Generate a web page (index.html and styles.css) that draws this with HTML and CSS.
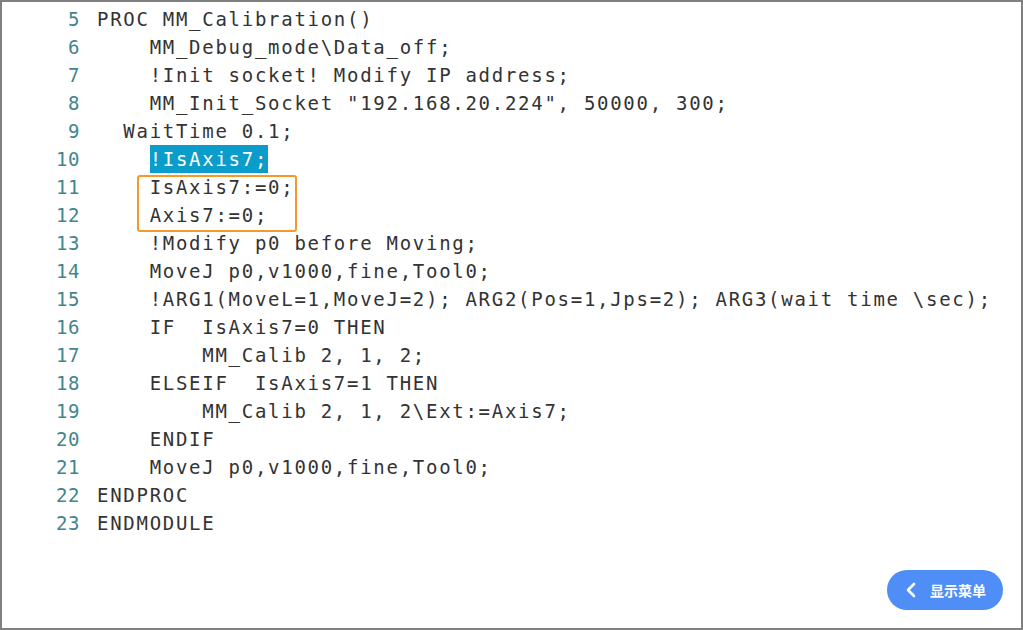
FILE: index.html
```html
<!DOCTYPE html>
<html>
<head>
<meta charset="utf-8">
<link rel="stylesheet" href="styles.css">
</head>
<body>
<div class="frame">
  <div class="code">
    <div class="line"><span class="num">5</span><span class="txt">PROC MM_Calibration()</span></div>
    <div class="line"><span class="num">6</span><span class="txt">    MM_Debug_mode\Data_off;</span></div>
    <div class="line"><span class="num">7</span><span class="txt">    !Init socket! Modify IP address;</span></div>
    <div class="line"><span class="num">8</span><span class="txt">    MM_Init_Socket "192.168.20.224", 50000, 300;</span></div>
    <div class="line"><span class="num">9</span><span class="txt">  WaitTime 0.1;</span></div>
    <div class="line"><span class="num">10</span><span class="txt">    <span class="sel">!IsAxis7;</span></span></div>
    <div class="line"><span class="num">11</span><span class="txt">    IsAxis7:=0;</span></div>
    <div class="line"><span class="num">12</span><span class="txt">    Axis7:=0;</span></div>
    <div class="line"><span class="num">13</span><span class="txt">    !Modify p0 before Moving;</span></div>
    <div class="line"><span class="num">14</span><span class="txt">    MoveJ p0,v1000,fine,Tool0;</span></div>
    <div class="line"><span class="num">15</span><span class="txt">    !ARG1(MoveL=1,MoveJ=2); ARG2(Pos=1,Jps=2); ARG3(wait time \sec);</span></div>
    <div class="line"><span class="num">16</span><span class="txt">    IF  IsAxis7=0 THEN</span></div>
    <div class="line"><span class="num">17</span><span class="txt">        MM_Calib 2, 1, 2;</span></div>
    <div class="line"><span class="num">18</span><span class="txt">    ELSEIF  IsAxis7=1 THEN</span></div>
    <div class="line"><span class="num">19</span><span class="txt">        MM_Calib 2, 1, 2\Ext:=Axis7;</span></div>
    <div class="line"><span class="num">20</span><span class="txt">    ENDIF</span></div>
    <div class="line"><span class="num">21</span><span class="txt">    MoveJ p0,v1000,fine,Tool0;</span></div>
    <div class="line"><span class="num">22</span><span class="txt">ENDPROC</span></div>
    <div class="line"><span class="num">23</span><span class="txt">ENDMODULE</span></div>
    <div class="mark"></div>
  </div>
  <button class="menu-btn">
    <svg class="chev" width="12" height="16" viewBox="0 0 12 16"><path d="M9 2 L3 8 L9 14" fill="none" stroke="#fff" stroke-width="2.6" stroke-linecap="round" stroke-linejoin="round"/></svg>
    <span class="menu-label">显示菜单</span>
  </button>
</div>
</body>
</html>
```
FILE: styles.css
```css
html, body {
  margin: 0;
  padding: 0;
  background: #fff;
}
.frame {
  position: relative;
  width: 1023px;
  height: 630px;
  box-sizing: border-box;
  border: 2px solid #808080;
  overflow: hidden;
}
.code {
  position: relative;
  padding-top: 3px;
  font-family: "DejaVu Sans Mono", "Liberation Mono", monospace;
  font-size: 19px;
  letter-spacing: 1.72px;
  color: #333;
}
.line {
  display: flex;
  height: 28px;
  line-height: 28px;
  white-space: pre;
}
.num {
  width: 78px;
  box-sizing: border-box;
  text-align: right;
  color: #3f8690;
  letter-spacing: 0.5px;
}
.txt {
  margin-left: 17px;
}
.sel {
  display: inline-block;
  background: #0a9ccb;
  color: #fff;
}
.mark {
  position: absolute;
  left: 135px;
  top: 173px;
  width: 160px;
  height: 57px;
  box-sizing: border-box;
  border: 2px solid #f39a2b;
  border-radius: 3px;
}
.menu-btn {
  position: absolute;
  right: 18px;
  bottom: 18px;
  width: 116px;
  height: 40px;
  border: none;
  border-radius: 20px;
  background: #4f8ef7;
  color: #fff;
  display: flex;
  align-items: center;
  padding: 0 0 0 18px;
  gap: 13px;
}
.menu-label {
  font-family: "Noto Sans CJK SC", "Noto Sans", sans-serif;
  font-weight: 700;
  font-size: 14px;
}
```
